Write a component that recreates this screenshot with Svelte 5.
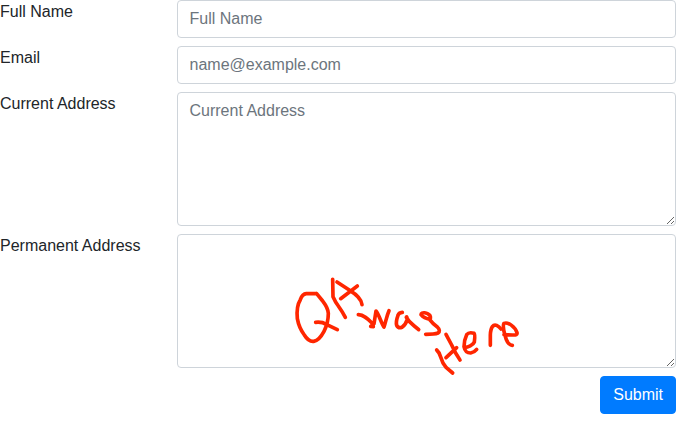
<script>
  let fullName = $state('');
  let email = $state('');
  let currentAddress = $state('');
  let permanentAddress = $state('');
</script>

<form class="form" onsubmit={(e) => e.preventDefault()}>
  <div class="row">
    <label for="name">Full Name</label>
    <input id="name" type="text" placeholder="Full Name" bind:value={fullName} />
  </div>
  <div class="row">
    <label for="email">Email</label>
    <input id="email" type="email" placeholder="name@example.com" bind:value={email} />
  </div>
  <div class="row">
    <label for="current">Current Address</label>
    <textarea id="current" rows="5" placeholder="Current Address" bind:value={currentAddress}></textarea>
  </div>
  <div class="row">
    <label for="permanent">Permanent Address</label>
    <textarea id="permanent" rows="5" bind:value={permanentAddress}></textarea>
  </div>
  <div class="actions">
    <button type="submit">Submit</button>
  </div>

  <svg class="scribble" width="676" height="438" viewBox="0 0 676 438" aria-hidden="true">
    <g transform="translate(285 270) scale(.33333)">
      <path d="M95 71L64 71Q52 72 46 89C34 108 35 126 37 146C41 168 49 183 58 195C67 210 77 215 86 214C98 212 107 203 117 184C127 165 130 154 130 130C129 113 119 101 113 93L95 71" />
      <path d="M92 157Q111 155 124 163L157 179" />
      <path d="M143 28L144 80Q151 96 160 108Q172 125 181 142" />
      <path d="M156 36L194 61Q229 82 231 104M217 48L167 86" />
      <path d="M220 134C237 134 249 147 263 161L265 170L257 169L267 161L273 123C282 133 289 161 297 171C303 153 305 138 312 122" />
    </g>
    <g transform="translate(380 295) scale(.33333)">
      <path d="M67 52Q56 53 54 61Q47 80 50 91Q55 101 66 97Q77 89 82 73Q80 63 79 67C89 85 101 90 116 104" />
      <path d="M150 73Q132 70 123 59C123 50 143 52 150 62Q153 69 149 74Q158 86 172 96Q183 107 174 114Q164 118 137 118" />
      <path d="M170 165Q178 172 182 186Q187 205 199 218L218 234M198 118Q206 133 215 150Q226 175 240 195M230 158L198 188" />
      <path d="M254 157C264 157 279 151 283 141Q286 118 282 115Q267 110 260 119Q252 136 252 155C255 171 261 174 272 174Q283 172 290 163" />
      <path d="M331 151L331 120C332 96 340 87 350 91Q357 94 363 102" />
      <path d="M372 119L398 120Q413 121 411 113C405 95 384 80 372 85C367 93 371 107 375 121C379 138 386 150 397 151" />
    </g>
  </svg>
</form>

<style>
  :global(body) {
    margin: 0;
    background: #fff;
    overflow: hidden;
  }

  .form {
    position: relative;
    display: flex;
    flex-direction: column;
    gap: 8px;
    height: 438px;
    font: 16px/24px "Liberation Sans", Arial, sans-serif;
    color: #212529;
  }

  .row {
    display: grid;
    grid-template-columns: 176.5px 1fr;
    align-items: start;
  }

  label {
    line-height: 24px;
  }

  input,
  textarea {
    box-sizing: border-box;
    display: block;
    width: 100%;
    margin: 0;
    padding: 6px 12px;
    border: 1px solid #ced4da;
    border-radius: 4px;
    background: #fff;
    color: #495057;
    font: inherit;
  }

  input {
    height: 38px;
  }

  textarea {
    height: 134px;
    resize: vertical;
    overflow: auto;
  }

  input::placeholder,
  textarea::placeholder {
    color: #6c757d;
    opacity: 1;
  }

  .actions {
    display: flex;
    justify-content: flex-end;
  }

  button {
    padding: 6px 12px;
    border: 1px solid #007bff;
    border-radius: 4px;
    background: #007bff;
    color: #fff;
    font: inherit;
  }

  .scribble {
    position: absolute;
    top: 0;
    left: 0;
    pointer-events: none;
    fill: none;
    stroke: #ff2600;
    stroke-width: 11;
    stroke-linecap: round;
    stroke-linejoin: round;
  }
</style>
